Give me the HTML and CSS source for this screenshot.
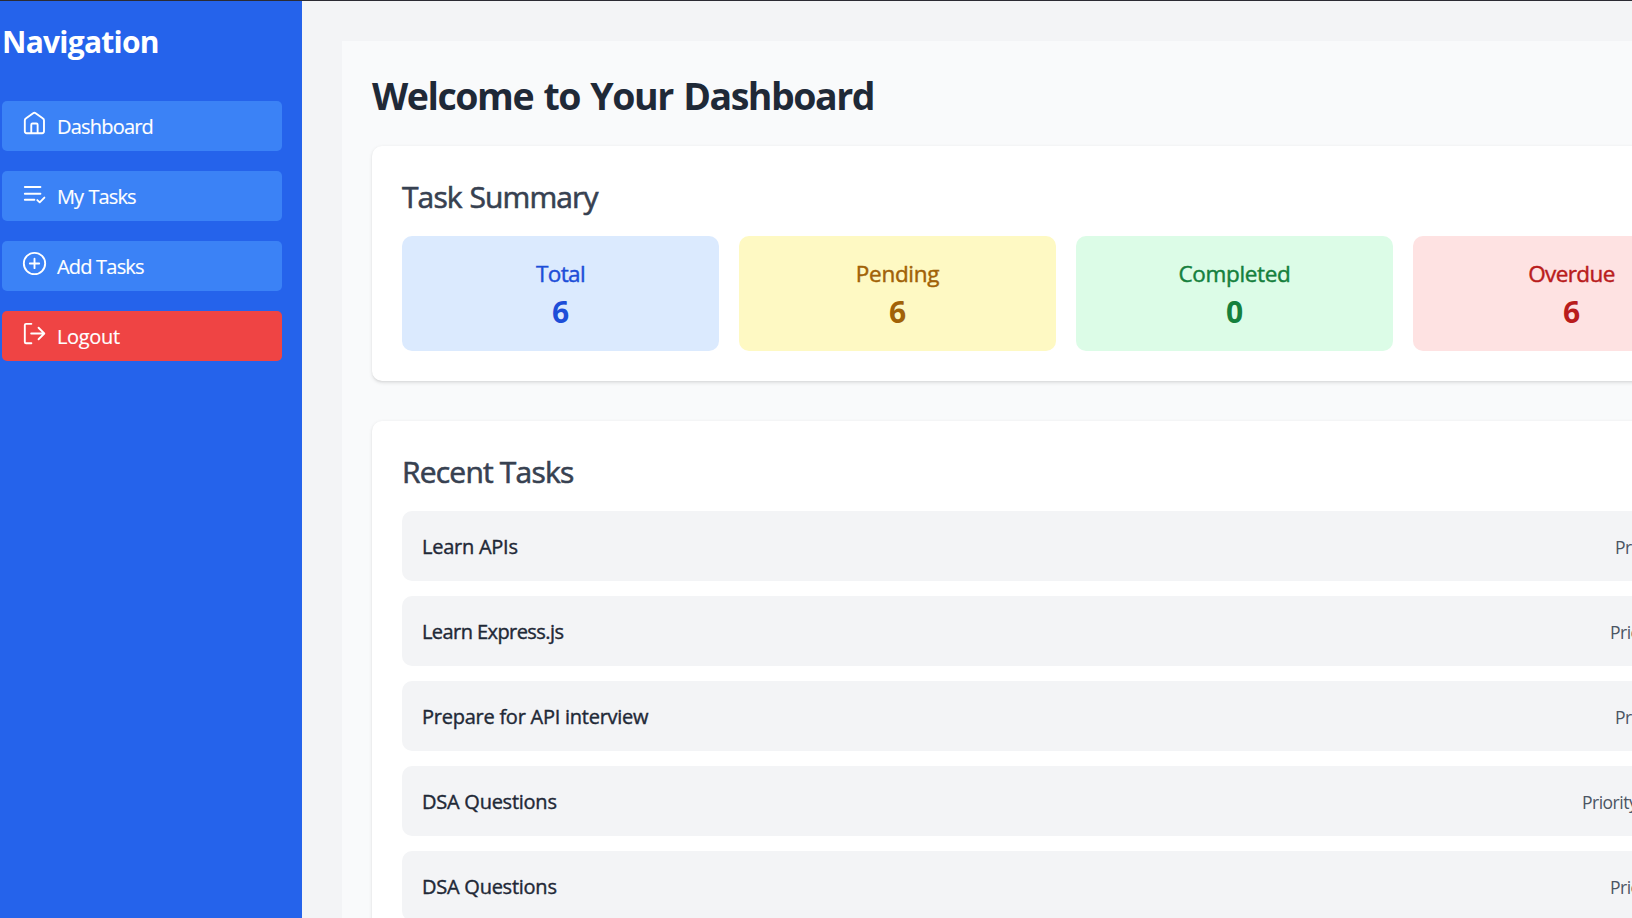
FILE: index.html
```html
<!DOCTYPE html>
<html lang="en">
<head>
<meta charset="utf-8">
<title>Dashboard</title>
<link rel="stylesheet" href="styles.css">
</head>
<body>
<div class="shell">
  <aside class="sidebar">
    <h2 class="sidebar-title">Navigation</h2>
    <nav class="menu">
      <a class="menu-item">
        <svg class="icon" viewBox="0 0 24 24"><path d="M2.7 9.1c0-.7.3-1.4.9-1.8l7.1-5.2a2 2 0 0 1 2.4 0l7.1 5.2c.6.4.9 1.1.9 1.8v10.4c0 1-.8 1.8-1.8 1.8H4.5c-1 0-1.8-.8-1.8-1.8z"/><path d="M8.9 21.2v-8c0-.7.5-1.2 1.2-1.2h3.7c.7 0 1.2.5 1.2 1.2v8"/></svg>
        <span>Dashboard</span>
      </a>
      <a class="menu-item">
        <svg class="icon" viewBox="0 0 24 24"><path d="M2.7 5.8h15M2.7 12.2h15M2.7 18h9.2M14.7 18.3l2.3 2.2 4.5-4.6"/></svg>
        <span class="snug">My Tasks</span>
      </a>
      <a class="menu-item">
        <svg class="icon" viewBox="0 0 24 24"><circle cx="12" cy="12" r="10.25"/><path d="M12 7.5v9M7.5 12h9"/></svg>
        <span>Add Tasks</span>
      </a>
      <a class="menu-item menu-item-logout">
        <svg class="icon" viewBox="0 0 24 24"><path d="M9 2.700H3.900c-.7 0-1.200.5-1.200 1.200v16.200c0 .7.5 1.200 1.200 1.200H9M8.800 12h12.500M15.900 6.500l5.500 5.500-5.500 5.500"/></svg>
        <span>Logout</span>
      </a>
    </nav>
  </aside>
  <main class="main">
    <div class="panel">
      <h1 class="page-title">Welcome to Your Dashboard</h1>
      <section class="card">
        <h2 class="card-title summary-title">Task Summary</h2>
        <div class="stats">
          <div class="stat stat-total"><h3>Total</h3><p>6</p></div>
          <div class="stat stat-pending"><h3>Pending</h3><p>6</p></div>
          <div class="stat stat-completed"><h3>Completed</h3><p>0</p></div>
          <div class="stat stat-overdue"><h3>Overdue</h3><p>6</p></div>
        </div>
      </section>
      <section class="card">
        <h2 class="card-title">Recent Tasks</h2>
        <ul class="tasks">
          <li class="task"><span class="name">Learn APIs</span><span class="priority low">Priority: Low</span></li>
          <li class="task"><span class="name name-tight">Learn Express.js</span><span class="priority high">Priority: High</span></li>
          <li class="task"><span class="name">Prepare for API interview</span><span class="priority low">Priority: Low</span></li>
          <li class="task"><span class="name">DSA Questions</span><span class="priority">Priority: Medium</span></li>
          <li class="task"><span class="name">DSA Questions</span><span class="priority high">Priority: High</span></li>
        </ul>
      </section>
    </div>
  </main>
</div>
</body>
</html>
```
FILE: styles.css
```css
* { box-sizing: border-box; margin: 0; padding: 0; }

body {
  height: 918px;
  overflow: hidden;
  background: #f3f4f6;
  font-family: "Open Sans", "Noto Sans", sans-serif;
  font-size: 20px;
  line-height: 30px;
}

.shell {
  display: flex;
  width: 1830px;
  height: 918px;
  border-top: 1px solid #2b2b33;
}

/* Sidebar */
.sidebar {
  flex: none;
  width: 302px;
  padding: 21px 20px 20px 2px;
  background: #2563eb;
  color: #fff;
}

.sidebar-title {
  margin-bottom: 39px;
  font-size: 30px;
  line-height: 40px;
  font-weight: 700;
  letter-spacing: -0.75px;
}

.menu { display: grid; gap: 20px; }

.menu-item {
  display: flex;
  align-items: flex-start;
  gap: 10px;
  height: 50px;
  padding: 10px 20px;
  border-radius: 5px;
  background: #3b82f6;
  letter-spacing: -0.8px;
}

.menu-item span { padding-top: 1px; -webkit-text-stroke: 0.15px currentColor; }

.menu-item .snug { letter-spacing: -0.9px; word-spacing: 1px; }

.menu-item-logout { background: #ef4444; letter-spacing: -0.35px; }

.icon {
  flex: none;
  width: 25px;
  height: 25px;
  fill: none;
  stroke: #fff;
  stroke-width: 1.8;
  stroke-linecap: round;
  stroke-linejoin: round;
}

/* Main area */
.main { flex: 1; padding: 40px; }

.panel {
  display: grid;
  width: 1448px;
  padding: 30px;
  background: #f9fafb;
}

.page-title {
  margin-bottom: 28px;
  padding-top: 2px;
  color: #1f2937;
  font-size: 37.5px;
  line-height: 45px;
  font-weight: 700;
  letter-spacing: -1.45px;
  word-spacing: 2px;
}

.card {
  margin-bottom: 40px;
  padding: 30px;
  border-radius: 10px;
  background: #fff;
  box-shadow: 0 1.25px 3.75px rgba(0, 0, 0, 0.1), 0 1.25px 2.5px -1.25px rgba(0, 0, 0, 0.1);
}

.card-title {
  margin-bottom: 19px;
  padding-top: 1px;
  color: #374151;
  font-size: 30px;
  line-height: 40px;
  font-weight: 500;
  letter-spacing: -0.8px;
  -webkit-text-stroke: 0.6px currentColor;
}

.summary-title { letter-spacing: -0.9px; word-spacing: 1px; }

.stats { display: grid; grid-template-columns: repeat(4, 1fr); gap: 20px; }

.stat { padding: 20px; border-radius: 10px; text-align: center; }
.stat h3 { font-size: 22.5px; line-height: 35px; font-weight: 500; -webkit-text-stroke: 0.45px currentColor; }
.stat p { padding-top: 1px; font-size: 30px; line-height: 39px; font-weight: 700; }

.stat-total { background: #dbeafe; color: #1d4ed8; }
.stat-total h3 { letter-spacing: -0.6px; }
.stat-pending { background: #fef9c3; color: #a16207; }
.stat-pending h3 { letter-spacing: -0.3px; }
.stat-completed { background: #dcfce7; color: #15803d; }
.stat-completed h3 { letter-spacing: -0.35px; }
.stat-overdue { background: #fee2e2; color: #b91c1c; }
.stat-overdue h3 { letter-spacing: -0.6px; }

/* Task list */
.tasks { display: grid; gap: 15px; list-style: none; }

.task {
  display: flex;
  justify-content: space-between;
  align-items: center;
  height: 70px;
  padding: 20px;
  border-radius: 10px;
  background: #f3f4f6;
}

.name {
  padding-top: 2px;
  color: #1f2937;
  font-weight: 500;
  letter-spacing: -0.25px;
  -webkit-text-stroke: 0.4px currentColor;
}
.name-tight { letter-spacing: -0.57px; }

.priority {
  width: 128px;
  padding-top: 2px;
  color: #4b5563;
  font-size: 17.5px;
  line-height: 25px;
  letter-spacing: -0.5px;
  white-space: nowrap;
}
.priority.low { width: 95px; }
.priority.high { width: 100px; }
```
